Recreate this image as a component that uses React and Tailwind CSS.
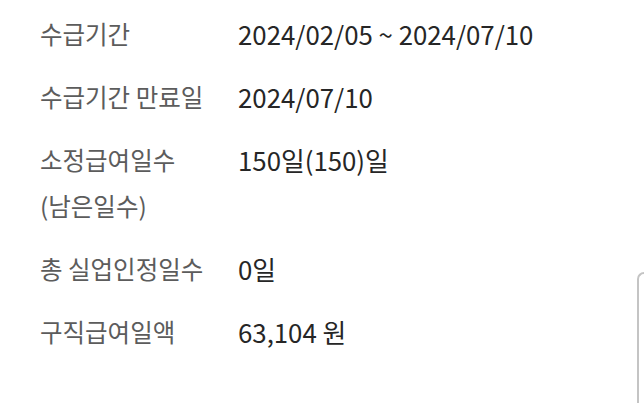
import React from "react";

const rows = [
  { label: ["수급기간"], value: "2024/02/05 ~ 2024/07/10" },
  { label: ["수급기간 만료일"], value: "2024/07/10" },
  { label: ["소정급여일수", "(남은일수)"], value: "150일(150)일" },
  { label: ["총 실업인정일수"], value: "0일" },
  { label: ["구직급여일액"], value: "63,104 원" },
];

export default function App() {
  return (
    <div
      className="flex w-[644px] h-[403px] overflow-hidden bg-white"
      style={{ fontFamily: '"Noto Sans CJK KR", "Noto Sans", sans-serif' }}
    >
      <div className="flex-1 pl-[40px] pt-[11px] flex flex-col gap-[17px]">
        {rows.map((row) => (
          <div key={row.value} className="grid grid-cols-[198px_1fr] leading-[46px]">
            <div className="text-[24.5px] text-[#5c5c5c]">
              {row.label.map((l) => (
                <div key={l}>{l}</div>
              ))}
            </div>
            <div className="text-[25.8px] text-[#262626]">{row.value}</div>
          </div>
        ))}
      </div>
      <div className="mt-[272px] h-[140px] w-[7px] shrink-0 border-l-2 border-t-2 border-[#c4c4c4] rounded-tl-[8px]" />
    </div>
  );
}
